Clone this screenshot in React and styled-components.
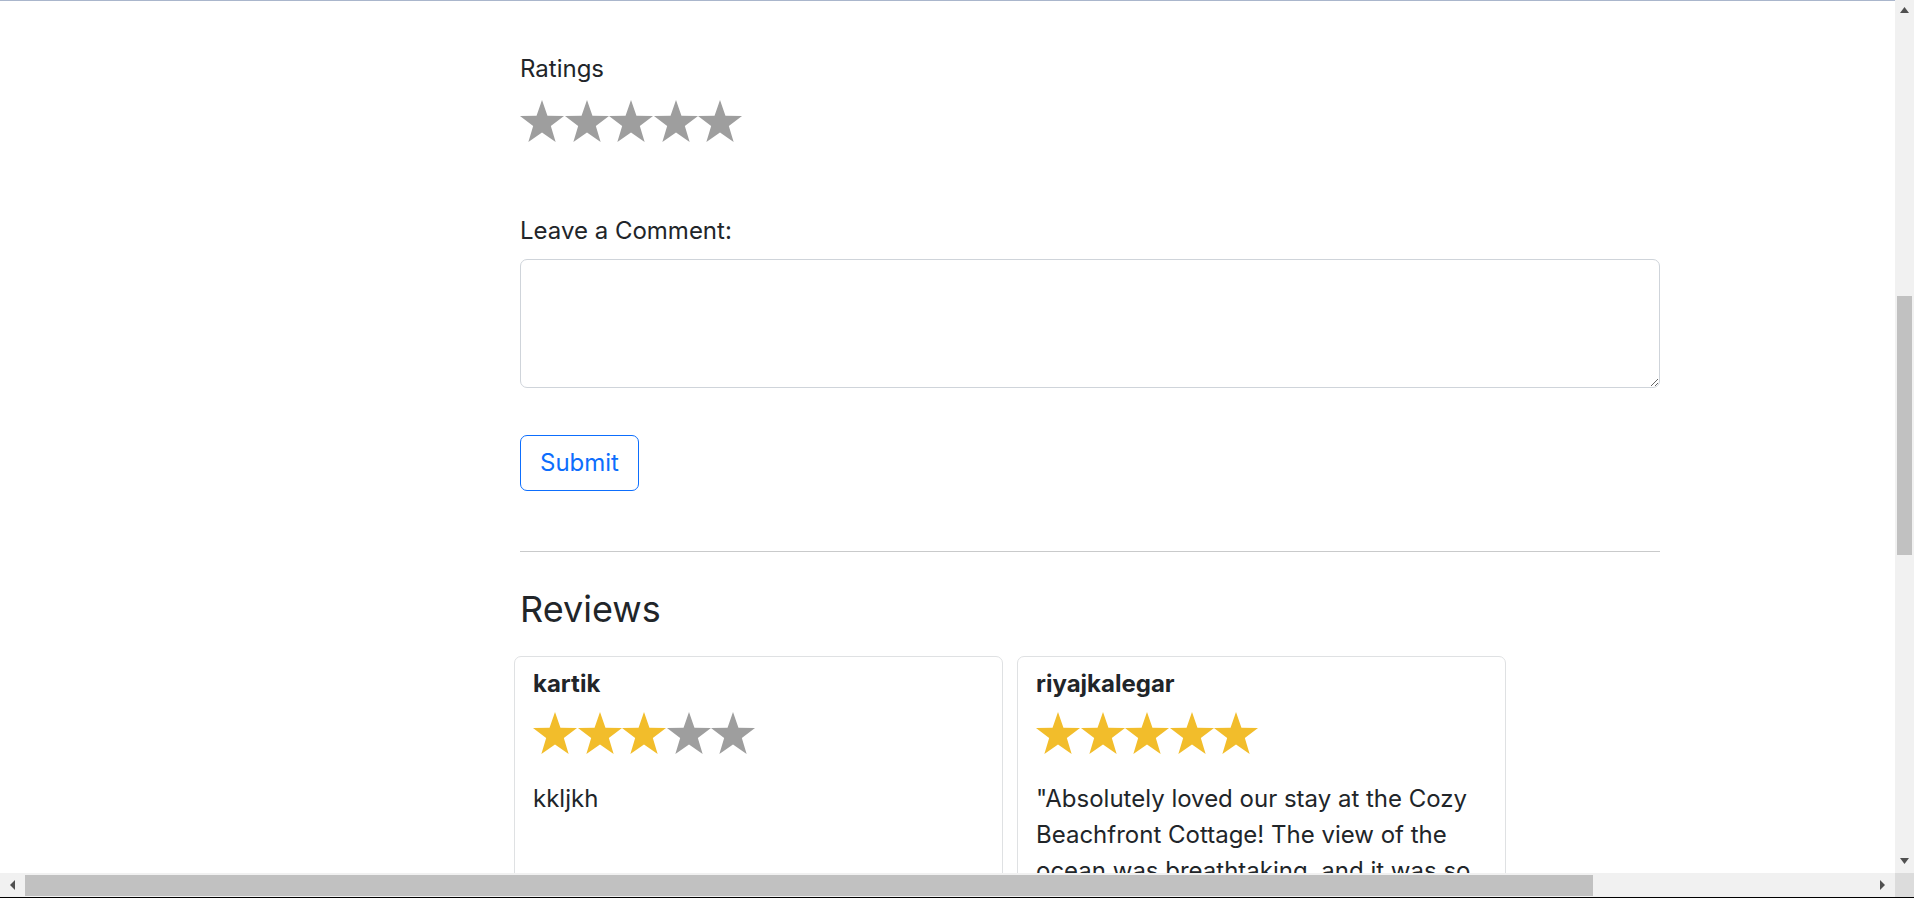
import React from 'react';
import styled, { createGlobalStyle } from 'styled-components';

const GlobalStyle = createGlobalStyle`
  html, body {
    margin: 0;
    padding: 0;
    overflow: hidden;
    background: #fff;
  }
  body {
    font-family: Inter, "Liberation Sans", sans-serif;
    color: #212529;
  }
  * {
    box-sizing: border-box;
  }
`;

const Frame = styled.div`
  display: grid;
  grid-template-columns: 1fr 19px;
  grid-template-rows: 873px 24px;
  width: 100vw;
  height: 898px;
  border-bottom: 1px solid #000;
`;

const Main = styled.main`
  overflow: hidden;
  border-top: 1px solid #aab6cc;
  padding: 50px 0 0 520px;
`;

const Container = styled.div`
  width: 1140px;
`;

const Label = styled.label`
  display: block;
  font-size: 24px;
  line-height: 36px;
  color: #212529;
`;

const StarRow = styled.div`
  display: flex;
  gap: ${(p) => p.$gap || 0}px;
  margin-top: 13px;
`;

const CommentGroup = styled.div`
  margin-top: 71px;
`;

const TextArea = styled.textarea`
  display: block;
  width: 100%;
  height: 129px;
  margin-top: 10px;
  border: 1px solid #cfd4da;
  border-radius: 7px;
  font: inherit;
  font-size: 24px;
  resize: vertical;
  padding: 8px 14px;
  outline: none;
`;

const SubmitButton = styled.button`
  margin-top: 47px;
  height: 56px;
  padding: 0 19px;
  background: #fff;
  color: #0d6efd;
  border: 1px solid #0d6efd;
  border-radius: 7px;
  font-family: inherit;
  font-size: 24px;
  line-height: 36px;
  cursor: pointer;
`;

const Divider = styled.hr`
  margin: 60px 0 0;
  border: 0;
  border-top: 1px solid #c9cacb;
`;

const Heading = styled.h2`
  margin: 36px 0 0;
  font-size: 36px;
  font-weight: 400;
  line-height: 1.2;
  color: #212529;
`;

const CardRow = styled.div`
  display: flex;
  gap: 14px;
  margin: 25px 0 0 -6px;
`;

const Card = styled.div`
  width: 489px;
  border: 1px solid #dfe1e3;
  border-radius: 7px;
  padding: 13px 18px 40px;
`;

const Author = styled.div`
  font-size: 24px;
  font-weight: 700;
  line-height: 1.2;
  color: #212529;
`;

const ReviewText = styled.p`
  margin: 27px 0 0;
  font-size: 24px;
  line-height: 36px;
  color: #212529;
`;

const VBar = styled.div`
  display: flex;
  flex-direction: column;
  background: #f1f1f1;
`;

const VTrack = styled.div`
  flex: 1;
`;

const VThumb = styled.div`
  width: 15px;
  height: 259px;
  margin: 276px auto 0;
  background: #c1c1c1;
`;

const HBar = styled.div`
  display: flex;
  align-items: stretch;
  background: #f1f1f1;
`;

const HThumb = styled.div`
  width: 1568px;
  margin: 2px 0 1px;
  background: #c1c1c1;
`;

const HTrack = styled.div`
  flex: 1;
`;

const ArrowBox = styled.div`
  display: flex;
  align-items: center;
  justify-content: center;
  width: ${(p) => p.$w}px;
  height: ${(p) => p.$h}px;
  flex-shrink: 0;
`;

const Corner = styled.div`
  background: #dcdcdc;
`;

const Star = ({ on }) => (
  <svg width="44" height="42" viewBox="0 0 44 42">
    <polygon
      points="22,0 27.45,15.69 44,16.03 30.83,26.07 35.64,42 22,32.48 8.36,42 13.17,26.07 0,16.03 16.55,15.69"
      fill={on ? '#f2bd2b' : '#9e9e9e'}
    />
  </svg>
);

const Stars = ({ value }) => (
  <StarRow $gap={0.6}>
    {[1, 2, 3, 4, 5].map((n) => (
      <Star key={n} on={n <= value} />
    ))}
  </StarRow>
);

const arrowPoints = {
  up: '0,7 4.5,1 9,7',
  down: '0,1 4.5,7 9,1',
  left: '6,0 6,10 1,5',
  right: '1,0 1,10 6,5',
};

const Arrow = ({ dir }) => {
  const vertical = dir === 'up' || dir === 'down';
  return (
    <svg width={vertical ? 9 : 7} height={vertical ? 8 : 10}>
      <polygon points={arrowPoints[dir]} fill="#505050" />
    </svg>
  );
};

const reviews = [
  { user: 'kartik', rating: 3, comment: 'kkljkh' },
  {
    user: 'riyajkalegar',
    rating: 5,
    comment:
      '"Absolutely loved our stay at the Cozy Beachfront Cottage! The view of the ocean was breathtaking, and it was so peaceful to fall asleep to the sound of the waves. Highly recommend!"',
  },
];

export default function App() {
  return (
    <>
      <GlobalStyle />
      <Frame>
        <Main>
          <Container>
            <Label>Ratings</Label>
            <Stars value={0} />

            <CommentGroup>
              <Label htmlFor="comment">Leave a Comment:</Label>
              <TextArea id="comment" />
            </CommentGroup>

            <SubmitButton>Submit</SubmitButton>

            <Divider />

            <Heading>Reviews</Heading>
            <CardRow>
              {reviews.map((r) => (
                <Card key={r.user}>
                  <Author>{r.user}</Author>
                  <Stars value={r.rating} />
                  <ReviewText>{r.comment}</ReviewText>
                </Card>
              ))}
            </CardRow>
          </Container>
        </Main>

        <VBar>
          <ArrowBox $w={19} $h={20}>
            <Arrow dir="up" />
          </ArrowBox>
          <VTrack>
            <VThumb />
          </VTrack>
          <ArrowBox $w={19} $h={24}>
            <Arrow dir="down" />
          </ArrowBox>
        </VBar>

        <HBar>
          <ArrowBox $w={25} $h={24}>
            <Arrow dir="left" />
          </ArrowBox>
          <HThumb />
          <HTrack />
          <ArrowBox $w={25} $h={24}>
            <Arrow dir="right" />
          </ArrowBox>
        </HBar>
        <Corner />
      </Frame>
    </>
  );
}
